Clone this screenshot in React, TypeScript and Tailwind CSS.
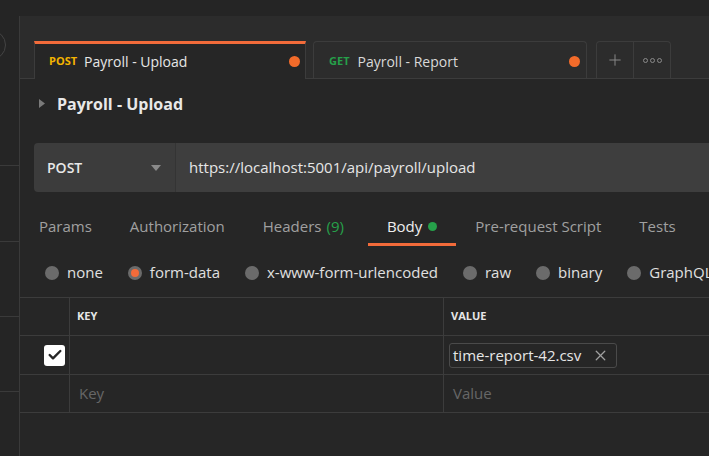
import { Plus, X, Check } from "lucide-react";

const requestTabs = [
  { method: "POST", methodClass: "text-[#f4b400]", name: "Payroll - Upload", active: true },
  { method: "GET", methodClass: "text-[#26a04a]", name: "Payroll - Report", active: false },
];

const sections = ["Params", "Authorization", "Headers", "Body", "Pre-request Script", "Tests"];

const bodyModes = ["none", "form-data", "x-www-form-urlencoded", "raw", "binary", "GraphQL"];

function Radio({ checked }: { checked: boolean }) {
  return (
    <span className="w-[14px] h-[14px] rounded-full bg-[#6b6b6b] flex items-center justify-center shrink-0">
      {checked && <span className="w-[8px] h-[8px] rounded-full bg-[#f26b3a]" />}
    </span>
  );
}

export default function App() {
  return (
    <div className="w-[709px] h-[456px] overflow-hidden bg-[#252525] flex flex-col font-['Open_Sans',sans-serif] text-[#e6e6e6]">
      {/* Top strip */}
      <div className="h-[16px] shrink-0" />

      <div className="flex flex-1 min-h-0">
        {/* Sidebar edge */}
        <div className="relative w-[20px] shrink-0 border-r border-[#3a3a3a] overflow-hidden">
          <div className="absolute left-[-24px] top-[14px] w-[30px] h-[30px] rounded-full border border-[#444]" />
          <div className="absolute left-0 right-0 top-[149px] h-px bg-[#3a3a3a]" />
          <div className="absolute left-0 right-0 top-[225px] h-px bg-[#3a3a3a]" />
          <div className="absolute left-0 right-0 top-[300px] h-px bg-[#3a3a3a]" />
          <div className="absolute left-0 right-0 top-[375px] h-px bg-[#3a3a3a]" />
        </div>

        <div className="flex-1 min-w-0 flex flex-col bg-[#262626]">
          {/* Request tabs */}
          <div className="h-[63px] shrink-0 bg-[#2c2c2c] border-b border-[#3c3c3c] flex items-end pl-[14px] gap-[7px]">
            {requestTabs.map((t) =>
              t.active ? (
                <div
                  key={t.name}
                  className="w-[272px] h-[38px] -mb-px bg-[#262626] border-t-[3px] border-t-[#f26b3a] border-l border-r border-[#3c3c3c] flex items-center pl-[14px] pr-[5px]"
                >
                  <span className={`text-[11px] font-bold mr-[7px] ${t.methodClass}`}>{t.method}</span>
                  <span className="text-[14px] text-[#e6e6e6]">{t.name}</span>
                  <span className="ml-auto w-[11px] h-[11px] rounded-full bg-[#f26b2a]" />
                </div>
              ) : (
                <div
                  key={t.name}
                  className="w-[274px] h-[37px] pt-[3px] rounded-t-[4px] border border-b-0 border-[#3c3c3c] flex items-center pl-[15px] pr-[6px]"
                >
                  <span className={`text-[11px] font-bold mr-[8px] ${t.methodClass}`}>{t.method}</span>
                  <span className="text-[14px] text-[#d9d9d9]">{t.name}</span>
                  <span className="ml-auto w-[11px] h-[11px] rounded-full bg-[#f26b2a]" />
                </div>
              )
            )}
            <div className="ml-[2px] h-[37px] rounded-t-[4px] border border-b-0 border-[#3c3c3c] flex">
              <div className="w-[37px] flex items-center justify-center border-r border-[#3c3c3c]">
                <Plus size={18} strokeWidth={1.3} className="text-[#8a8a8a]" />
              </div>
              <div className="w-[36px] flex items-center justify-center gap-[2px]">
                <span className="w-[5px] h-[5px] rounded-full border border-[#8a8a8a]" />
                <span className="w-[5px] h-[5px] rounded-full border border-[#8a8a8a]" />
                <span className="w-[5px] h-[5px] rounded-full border border-[#8a8a8a]" />
              </div>
            </div>
          </div>

          {/* Title */}
          <div className="h-[51px] shrink-0 flex items-center pl-[19px] pb-[2px]">
            <svg width="6" height="9" viewBox="0 0 6 9" className="mr-[12px]">
              <path d="M0 0 L6 4.5 L0 9 Z" fill="#7a7a7a" />
            </svg>
            <span className="text-[16px] font-bold text-[#e8e8e8]">Payroll - Upload</span>
          </div>

          {/* URL bar */}
          <div className="shrink-0 mt-[13px] ml-[14px] h-[49px] flex rounded-l-[4px] overflow-hidden">
            <div className="w-[142px] bg-[#3c3c3c] border-r border-[#343434] flex items-center pl-[13px] pr-[14px]">
              <span className="text-[14px] font-semibold text-[#e8e8e8]">POST</span>
              <svg width="10" height="6" viewBox="0 0 10 6" className="ml-auto">
                <path d="M0 0 H10 L5 6 Z" fill="#8a8a8a" />
              </svg>
            </div>
            <div className="flex-1 bg-[#3e3e3e] flex items-center pl-[13px]">
              <span className="text-[15px] text-[#e6e6e6]">https://localhost:5001/api/payroll/upload</span>
            </div>
          </div>

          {/* Section tabs */}
          <div className="shrink-0 mt-[16px] h-[38px] flex whitespace-nowrap">
            {sections.map((s) => {
              const active = s === "Body";
              return (
                <div
                  key={s}
                  className={`px-[19px] pt-[2px] flex items-center text-[15px] border-b-[3px] ${
                    active ? "ml-[5px] border-[#f26b3a] text-[#eeeeee]" : "border-transparent text-[#a0a0a0]"
                  }`}
                >
                  {s}
                  {s === "Headers" && <span className="ml-[5px] text-[#26a04a]">(9)</span>}
                  {active && <span className="ml-[6px] w-[9px] h-[9px] rounded-full bg-[#26a04a]" />}
                </div>
              );
            })}
          </div>

          {/* Body modes */}
          <div className="shrink-0 h-[51px] pt-[2px] flex items-center pl-[25px] gap-[25px] whitespace-nowrap">
            {bodyModes.map((m) => (
              <label key={m} className="flex items-center gap-[8px] text-[15px] text-[#e0e0e0]">
                <Radio checked={m === "form-data"} />
                {m}
              </label>
            ))}
          </div>

          {/* Form-data table */}
          <div className="shrink-0 border-t border-[#3c3c3c]">
            <div className="h-[38px] flex border-b border-[#3c3c3c]">
              <div className="w-[50px] border-r border-[#3c3c3c]" />
              <div className="w-[374px] border-r border-[#3c3c3c] flex items-center pl-[7px] text-[11px] font-bold text-[#e6e6e6]">
                KEY
              </div>
              <div className="flex-1 flex items-center pl-[7px] text-[11px] font-bold text-[#e6e6e6]">VALUE</div>
            </div>
            <div className="h-[39px] flex border-b border-[#3c3c3c]">
              <div className="w-[50px] border-r border-[#3c3c3c] flex items-center justify-end pr-[4px]">
                <span className="w-[21px] h-[21px] rounded-[3px] bg-white flex items-center justify-center">
                  <Check size={16} strokeWidth={3.6} className="text-[#262626]" />
                </span>
              </div>
              <div className="w-[374px] border-r border-[#3c3c3c]" />
              <div className="flex-1 flex items-center pl-[5px]">
                <span className="h-[25px] flex items-center gap-[11px] pl-[3px] pr-[7px] border border-[#4a4a4a] rounded-[3px] text-[15px] text-[#e6e6e6]">
                  time-report-42.csv
                  <X size={17} strokeWidth={1.8} className="text-[#a0a0a0]" />
                </span>
              </div>
            </div>
            <div className="h-[38px] flex border-b border-[#3c3c3c]">
              <div className="w-[50px] border-r border-[#3c3c3c]" />
              <div className="w-[374px] border-r border-[#3c3c3c] flex items-center pl-[9px] text-[15px] text-[#666]">
                Key
              </div>
              <div className="flex-1 flex items-center pl-[9px] text-[15px] text-[#666]">Value</div>
            </div>
          </div>
        </div>
      </div>
    </div>
  );
}
